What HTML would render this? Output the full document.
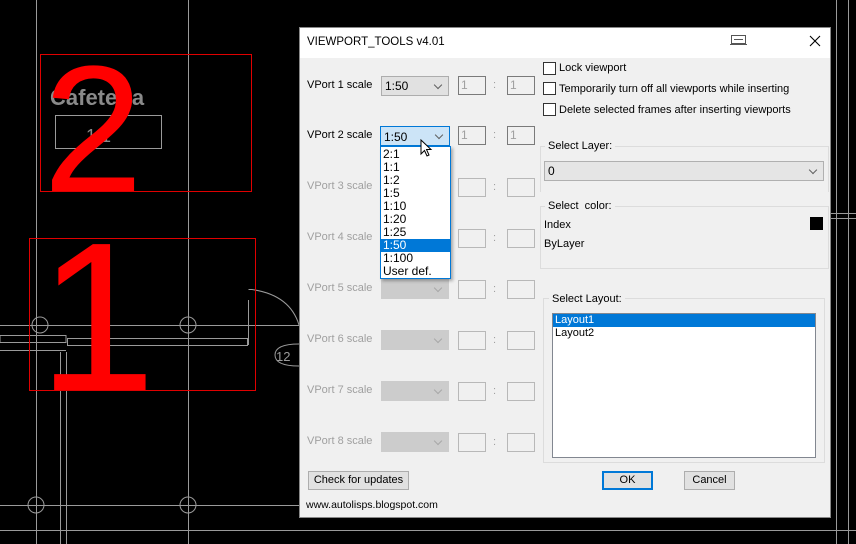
<!DOCTYPE html>
<html><head><meta charset="utf-8"><style>
*{box-sizing:border-box;margin:0;padding:0}
body{width:856px;height:544px;background:#000;position:relative;overflow:hidden;font-family:"Liberation Sans",sans-serif;font-size:11px;color:#000}
.a{position:absolute}
.t{position:absolute;white-space:nowrap;line-height:14px}
.lbl{color:#000}
.dis{color:#a0a0a0}
.cb{position:absolute;width:68px;height:20px;background:#e1e1e1;border:1px solid #adadad;font-size:12px}
.cb.d{background:#cccccc;border-color:#cccccc}
.cb::after{content:"";position:absolute;right:7px;top:5px;width:5px;height:5px;border-right:1px solid #606060;border-bottom:1px solid #606060;transform:rotate(45deg)}
.cb.d::after{border-color:#a8a8a8}
.ed{position:absolute;width:28px;height:19px;border:1px solid #7a7a7a;background:#f0f0f0;color:#a0a0a0;padding-left:2px;line-height:17px;font-size:12px}
.ed.d{border-color:#b8b8b8}
.chk{position:absolute;width:13px;height:13px;border:1px solid #333;background:#fff}
.grp{position:absolute;border:1px solid #dcdcdc}
.btn{position:absolute;height:19px;background:#e1e1e1;border:1px solid #adadad;text-align:center;line-height:17px}
</style></head><body>
<svg class="a" style="left:0;top:0" width="856" height="544">
<g stroke="#9a9a9a" stroke-width="1" fill="none">
<line x1="36.5" y1="0" x2="36.5" y2="544"/>
<line x1="188.5" y1="0" x2="188.5" y2="544"/>
<line x1="0" y1="325.5" x2="300" y2="325.5"/>
<line x1="0" y1="505.5" x2="300" y2="505.5"/>
<line x1="836.5" y1="0" x2="836.5" y2="544"/>
<line x1="848.5" y1="0" x2="848.5" y2="544"/>
<line x1="831" y1="213.5" x2="856" y2="213.5"/>
<line x1="831" y1="218.5" x2="856" y2="218.5"/>
<rect x="55.5" y="115.5" width="106" height="33"/>
<circle cx="40" cy="325" r="8"/><circle cx="188" cy="325" r="8"/>
<circle cx="36" cy="505" r="8"/><circle cx="188" cy="505" r="8"/>
<rect x="0" y="335.5" width="66" height="7"/><line x1="0" y1="350.5" x2="66" y2="350.5"/>
<rect x="67.5" y="338.5" width="180" height="7"/>
<line x1="60.5" y1="352" x2="60.5" y2="544"/><line x1="66.5" y1="352" x2="66.5" y2="544"/>
<path d="M248.5 300 V345 M248.5 289.5 H252 Q290 295 299 325"/>
<path d="M299 344 Q275 344 275 355 Q275 366 299 366"/>
<line x1="0" y1="530.5" x2="300" y2="530.5"/>
<line x1="299" y1="530.5" x2="856" y2="530.5"/>
</g>
<text x="50" y="105" fill="#8a8a8a" font-family="Liberation Sans" font-weight="bold" font-size="22">Cafeteria</text>
<text x="86" y="142" fill="#8a8a8a" font-family="Liberation Sans" font-size="18">1:1</text>
<g stroke="#e00000" fill="none"><rect x="40.5" y="54.5" width="211" height="137"/><rect x="29.5" y="238.5" width="226" height="152"/></g>
<text x="43" y="191" fill="#ff0000" font-family="Liberation Sans" font-size="180">2</text>
<text x="38" y="390" fill="#ff0000" font-family="Liberation Sans" font-size="212">1</text>
<text x="276" y="361" fill="#9a9a9a" font-family="Liberation Sans" font-size="13">12</text>
</svg>

<div class="a" style="left:299px;top:27px;width:532px;height:491px;background:#f0f0f0;border:1px solid #888">
<div class="a" style="left:0;top:0;width:530px;height:30px;background:#fff"></div>
</div>
<div class="t" style="left:307px;top:35px;font-size:11.5px">VIEWPORT_TOOLS v4.01</div>
<svg class="a" style="left:730px;top:34px" width="18" height="12"><rect x="1.5" y="1.5" width="14" height="8" fill="none" stroke="#555"/><line x1="4" y1="5.5" x2="13" y2="5.5" stroke="#555"/><line x1="0" y1="10.5" x2="17" y2="10.5" stroke="#555"/></svg>
<svg class="a" style="left:809px;top:35px" width="12" height="12"><path d="M1 1L11 11M11 1L1 11" stroke="#000" stroke-width="1.1"/></svg>

<div class="t lbl" style="left:307px;top:78px">VPort 1 scale</div>
<div class="cb" style="left:381px;top:76px"><span class="t" style="left:3px;top:2px">1:50</span></div>
<div class="ed" style="left:458px;top:76px">1</div><div class="t dis" style="left:493px;top:78px">:</div><div class="ed" style="left:507px;top:76px">1</div>

<div class="t lbl" style="left:307px;top:128px">VPort 2 scale</div>
<div class="cb" style="left:380px;top:126px;width:70px;background:#cce4f7;border-color:#0078d7"><span class="t" style="left:3px;top:3px">1:50</span></div>
<div class="ed" style="left:458px;top:126px">1</div><div class="t dis" style="left:493px;top:128px">:</div><div class="ed" style="left:507px;top:126px">1</div>

<div class="t dis" style="left:307px;top:179px">VPort 3 scale</div>
<div class="ed d" style="left:458px;top:178px"></div><div class="t dis" style="left:493px;top:180px">:</div><div class="ed d" style="left:507px;top:178px"></div>
<div class="t dis" style="left:307px;top:230px">VPort 4 scale</div>
<div class="ed d" style="left:458px;top:229px"></div><div class="t dis" style="left:493px;top:231px">:</div><div class="ed d" style="left:507px;top:229px"></div>
<div class="t dis" style="left:307px;top:281px">VPort 5 scale</div>
<div class="cb d" style="left:381px;top:279px"></div>
<div class="ed d" style="left:458px;top:280px"></div><div class="t dis" style="left:493px;top:282px">:</div><div class="ed d" style="left:507px;top:280px"></div>
<div class="t dis" style="left:307px;top:332px">VPort 6 scale</div>
<div class="cb d" style="left:381px;top:330px"></div>
<div class="ed d" style="left:458px;top:331px"></div><div class="t dis" style="left:493px;top:333px">:</div><div class="ed d" style="left:507px;top:331px"></div>
<div class="t dis" style="left:307px;top:383px">VPort 7 scale</div>
<div class="cb d" style="left:381px;top:381px"></div>
<div class="ed d" style="left:458px;top:382px"></div><div class="t dis" style="left:493px;top:384px">:</div><div class="ed d" style="left:507px;top:382px"></div>
<div class="t dis" style="left:307px;top:434px">VPort 8 scale</div>
<div class="cb d" style="left:381px;top:432px"></div>
<div class="ed d" style="left:458px;top:433px"></div><div class="t dis" style="left:493px;top:435px">:</div><div class="ed d" style="left:507px;top:433px"></div>

<div class="a" style="left:380px;top:146px;width:71px;height:133px;background:#fff;border:1px solid #0078d7;box-shadow:2px 2px 3px rgba(0,0,0,.3)">
<div style="line-height:13px;font-size:12px;padding-top:1px">
<div style="padding-left:2px">2:1</div><div style="padding-left:2px">1:1</div><div style="padding-left:2px">1:2</div><div style="padding-left:2px">1:5</div><div style="padding-left:2px">1:10</div><div style="padding-left:2px">1:20</div><div style="padding-left:2px">1:25</div><div style="padding-left:2px;background:#0078d7;color:#fff">1:50</div><div style="padding-left:2px">1:100</div><div style="padding-left:2px">User def.</div></div></div>
<svg class="a" style="left:420px;top:139px" width="14" height="20"><path d="M1 1 L1 15 L4.5 11.5 L7 17 L9 16 L6.5 10.5 L11 10.5 Z" fill="#fff" stroke="#000"/></svg>

<div class="chk" style="left:543px;top:62px"></div><div class="t" style="left:559px;top:61px">Lock viewport</div>
<div class="chk" style="left:543px;top:82px"></div><div class="t" style="left:559px;top:82px">Temporarily turn off all viewports while inserting</div>
<div class="chk" style="left:543px;top:103px"></div><div class="t" style="left:559px;top:103px">Delete selected frames after inserting viewports</div>

<div class="grp" style="left:540px;top:146px;width:289px;height:46px;border-bottom:none"></div>
<div class="t" style="left:545px;top:139px;background:#f0f0f0;padding:0 3px">Select Layer:</div>
<div class="cb" style="left:544px;top:161px;width:280px;background:#e5e5e5;border-color:#b0b0b0"><span class="t" style="left:3px;top:2px">0</span></div>

<div class="grp" style="left:540px;top:206px;width:289px;height:63px"></div>
<div class="t" style="left:545px;top:199px;background:#f0f0f0;padding:0 3px">Select&nbsp; color:</div>
<div class="t" style="left:544px;top:218px">Index</div>
<div class="t" style="left:544px;top:237px">ByLayer</div>
<div class="a" style="left:810px;top:217px;width:13px;height:13px;background:#000"></div>

<div class="grp" style="left:543px;top:298px;width:282px;height:165px"></div>
<div class="t" style="left:549px;top:292px;background:#f0f0f0;padding:0 3px">Select Layout:</div>
<div class="a" style="left:552px;top:313px;width:264px;height:145px;background:#fff;border:1px solid #828790">
<div style="background:#0078d7;color:#fff;line-height:13px;padding-left:2px">Layout1</div>
<div style="line-height:13px;padding-left:2px">Layout2</div></div>

<div class="btn" style="left:308px;top:471px;width:101px">Check for updates</div>
<div class="btn" style="left:602px;top:471px;width:51px;border:2px solid #0078d7;line-height:15px">OK</div>
<div class="btn" style="left:684px;top:471px;width:51px">Cancel</div>
<div class="t" style="left:306px;top:498px;font-size:10.5px">www.autolisps.blogspot.com</div>
</body></html>
